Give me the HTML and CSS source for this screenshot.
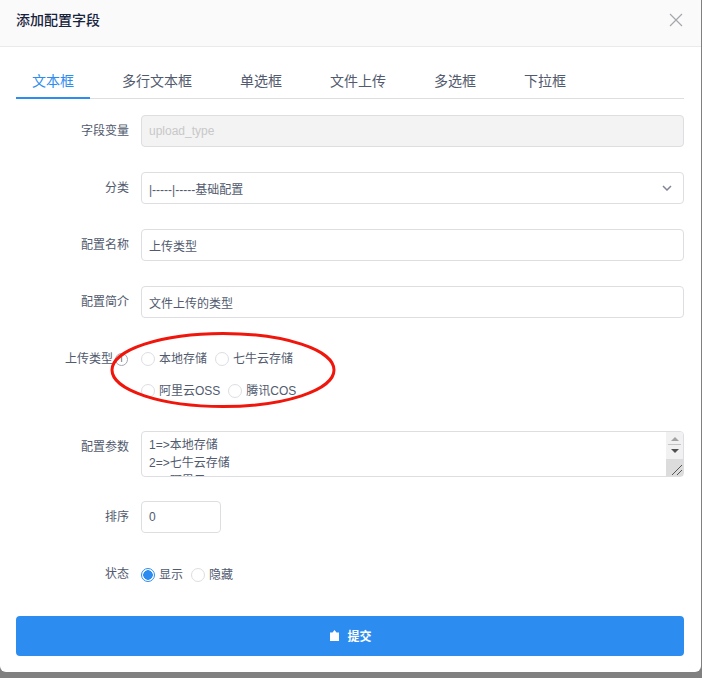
FILE: index.html
```html
<!DOCTYPE html>
<html>
    <head>
        <meta charset="utf-8">
        <title>添加配置字段</title>
        <link rel="stylesheet" href="styles.css">
    </head>
    <body>
        <div class="modal">
            <div class="modal-header">
                <span class="modal-title">添加配置字段</span>
                <svg class="close-icon" width="14" height="14" viewBox="0 0 14 14"><path d="M1 1L13 13M13 1L1 13"/></svg>
            </div>
            <div class="modal-body">
                <ul class="tabs">
                    <li class="tab active">文本框</li>
                    <li class="tab">多行文本框</li>
                    <li class="tab">单选框</li>
                    <li class="tab">文件上传</li>
                    <li class="tab">多选框</li>
                    <li class="tab">下拉框</li>
                </ul>
                <form class="form">
                    <div class="form-item">
                        <label class="form-label">字段变量</label>
                        <input class="input input-disabled" type="text" value="upload_type" disabled>
                    </div>
                    <div class="form-item">
                        <label class="form-label">分类</label>
                        <div class="select">
                            <span>|-----|-----基础配置</span>
                            <svg class="select-arrow" width="10" height="6" viewBox="0 0 10 6"><path d="M1 1L5 5L9 1"/></svg>
                        </div>
                    </div>
                    <div class="form-item">
                        <label class="form-label">配置名称</label>
                        <input class="input" type="text" value="上传类型">
                    </div>
                    <div class="form-item">
                        <label class="form-label">配置简介</label>
                        <input class="input" type="text" value="文件上传的类型">
                    </div>
                    <div class="form-item form-item-tight">
                        <label class="form-label form-label-info">上传类型<span class="info-icon">i</span></label>
                        <div class="radio-lines">
                            <div class="radio-line">
                                <label class="radio"><input type="radio" name="upload">本地存储</label>
                                <label class="radio"><input type="radio" name="upload">七牛云存储</label>
                            </div>
                            <div class="radio-line">
                                <label class="radio"><input type="radio" name="upload">阿里云OSS</label>
                                <label class="radio"><input type="radio" name="upload">腾讯COS</label>
                            </div>
                        </div>
                    </div>
                    <div class="form-item form-item-tight">
                        <label class="form-label">配置参数</label>
                        <div class="textarea-wrap">
                            <textarea class="textarea">1=&gt;本地存储
2=&gt;七牛云存储
3=&gt;阿里云OSS
4=&gt;腾讯COS</textarea>
                            <div class="scrollbar">
                                <div class="scroll-buttons">
                                    <span class="arrow-up"></span>
                                    <span class="scroll-divider"></span>
                                    <span class="arrow-down"></span>
                                </div>
                                <div class="scroll-track">
                                    <svg width="12" height="12" viewBox="0 0 12 12"><path d="M1 11L11 1M6 11L11 6"/></svg>
                                </div>
                            </div>
                        </div>
                    </div>
                    <div class="form-item">
                        <label class="form-label">排序</label>
                        <input class="input input-small" type="text" value="0">
                    </div>
                    <div class="form-item form-item-status">
                        <label class="form-label">状态</label>
                        <div class="radio-line">
                            <label class="radio"><input type="radio" name="status" checked>显示</label>
                            <label class="radio"><input type="radio" name="status">隐藏</label>
                        </div>
                    </div>
                    <button class="submit" type="button">
                        <svg width="9" height="11" viewBox="0 0 9 11"><path d="M4.5 0L6.5 2.5H9V11H0V2.5H2.5Z"/></svg>
                        提交
                    </button>
                </form>
            </div>
            <svg class="annotation" width="232" height="80" viewBox="0 0 232 80"><ellipse cx="116" cy="40" rx="111" ry="36.5"/></svg>
        </div>
    </body>
</html>
```

FILE: styles.css
```css
html, body {
    height: 100%;
}
body {
    margin: 0;
    background-color: #808080;
    font-family: "Liberation Sans", "Noto Sans CJK SC", sans-serif;
    font-size: 12px;
    color: #515a6e;
    overflow: hidden;
}

.modal {
    position: relative;
    width: 701px;
    height: 672px;
    background-color: white;
    border-radius: 0 0 6px 6px;
    overflow: hidden;
}

.modal-header {
    display: flex;
    align-items: center;
    justify-content: space-between;
    height: 46px;
    padding: 0 18px 0 16px;
    background-color: #fafafa;
    border-bottom: 1px solid #e8eaec;
}
.modal-title {
    margin-bottom: 8px;
    font-size: 14px;
    font-weight: 500;
    color: #17233d;
}
.close-icon {
    margin-bottom: 6px;
}
.close-icon path {
    fill: none;
    stroke: #a4a7ad;
    stroke-width: 1.2;
}

.modal-body {
    padding: 16px 17px 16px 16px;
}

.tabs {
    display: flex;
    gap: 16px;
    height: 35px;
    margin: 0 0 16px;
    padding: 0;
    list-style: none;
    border-bottom: 1px solid #dcdee2;
}
.tab {
    height: 36px;
    padding: 0 16px;
    box-sizing: border-box;
    font-size: 14px;
    line-height: 36px;
}
.tab.active {
    color: #2d8cf0;
    border-bottom: 2px solid #2d8cf0;
}

.form-item {
    display: flex;
    margin-bottom: 25px;
}
.form-item-tight {
    margin-bottom: 24px;
}
.form-label {
    flex: none;
    width: 125px;
    padding-right: 12px;
    box-sizing: border-box;
    line-height: 32px;
    text-align: right;
}
.form-label-info {
    display: flex;
    align-items: center;
    justify-content: flex-end;
    gap: 2px;
    height: 32px;
}
.info-icon {
    width: 11px;
    height: 11px;
    margin-right: 1px;
    border: 1px solid #a4a8b4;
    border-radius: 50%;
    font-size: 9px;
    line-height: 11px;
    text-align: center;
}

.input, .select, .textarea {
    box-sizing: border-box;
    border: 1px solid #dcdee2;
    border-radius: 4px;
    font-family: inherit;
    font-size: 12px;
    color: #515a6e;
    background-color: white;
}
.input {
    flex: 1;
    min-width: 0;
    height: 32px;
    padding: 0 7px;
    outline: none;
}
.input-disabled {
    background-color: #f3f3f3;
    color: #c8c8c8;
}
.input-small {
    flex: none;
    width: 80px;
}
.select {
    flex: 1;
    display: flex;
    align-items: center;
    justify-content: space-between;
    height: 32px;
    padding: 0 11px 0 7px;
}
.select-arrow path {
    fill: none;
    stroke: #808695;
    stroke-width: 1.5;
}

.radio-line {
    display: flex;
    height: 32px;
    align-items: center;
    gap: 8px;
}
.radio {
    display: flex;
    align-items: center;
    gap: 4px;
    line-height: 32px;
}
.radio input {
    appearance: none;
    width: 14px;
    height: 14px;
    margin: 0;
    border: 1px solid #dcdee2;
    border-radius: 50%;
    background-color: white;
}
.radio input:checked {
    border-color: #2d8cf0;
    background: radial-gradient(circle, #2d8cf0 0 4.5px, white 5px);
}
.form-item-status .radio-line {
    height: 33px;
}

.textarea-wrap {
    position: relative;
    flex: 1;
    height: 46px;
}
.textarea {
    display: block;
    width: 100%;
    height: 46px;
    padding: 4px 7px;
    line-height: 18px;
    overflow: hidden;
    resize: none;
    outline: none;
}
.scrollbar {
    position: absolute;
    top: 1px;
    right: 1px;
    bottom: 1px;
    width: 17px;
    display: flex;
    flex-direction: column;
    background-color: #f1f1f1;
    border-radius: 0 3px 3px 0;
}
.scroll-buttons {
    display: flex;
    flex-direction: column;
    align-items: center;
    height: 27px;
}
.arrow-up {
    width: 0;
    height: 0;
    margin-top: 5px;
    border: 4px solid transparent;
    border-top: 0;
    border-bottom: 4px solid #a3a3a3;
}
.scroll-divider {
    width: 13px;
    height: 1px;
    margin-top: 3px;
    background-color: #c4c4c4;
}
.arrow-down {
    width: 0;
    height: 0;
    margin-top: 4px;
    border: 4px solid transparent;
    border-bottom: 0;
    border-top: 4px solid #505050;
}
.scroll-track {
    flex: 1;
    display: flex;
    align-items: flex-end;
    justify-content: flex-end;
    background-color: #dcdcdc;
}
.scroll-track svg path {
    fill: none;
    stroke: #555;
    stroke-width: 1;
}

.submit {
    display: flex;
    align-items: center;
    justify-content: center;
    gap: 8px;
    width: 100%;
    height: 40px;
    padding: 0 0 2px 2px;
    border: 0;
    border-radius: 4px;
    background-color: #2d8cf0;
    color: white;
    font-family: inherit;
    font-size: 12px;
    font-weight: bold;
}
.submit svg path {
    fill: white;
}

.annotation {
    position: absolute;
    left: 107px;
    top: 330px;
    pointer-events: none;
}
.annotation ellipse {
    fill: none;
    stroke: #f0160c;
    stroke-width: 3;
}
```
